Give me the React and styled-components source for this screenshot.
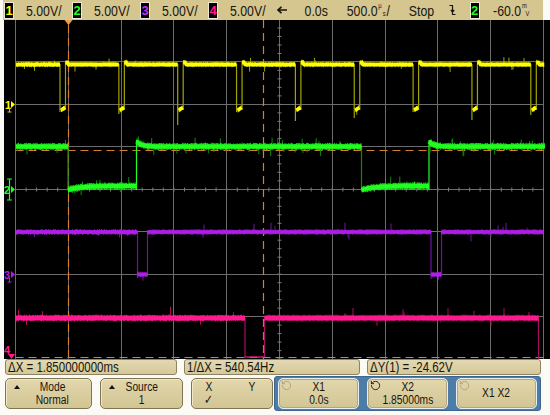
import React, { useMemo } from "react";
import styled, { createGlobalStyle } from "styled-components";
import { RotateCcw } from "lucide-react";

const FONT = `"Liberation Sans", Arial, sans-serif`;

const GlobalStyle = createGlobalStyle`
  html, body { margin: 0; padding: 0; background: #fbfaf4; }
`;

const Scope = styled.div`
  width: 550px;
  height: 415px;
  overflow: hidden;
  background: #fbfaf4;
  font-family: ${FONT};
  color: #17150e;
  display: flex;
  flex-direction: column;
`;

// the scope's own font is a narrow sans; squeeze Liberation Sans to match it
const Narrow = styled.span`
  display: inline-block;
  transform: scaleX(0.82);
  transform-origin: ${(p) => p.$origin || "center"};
  white-space: nowrap;
`;

const Header = styled.div`
  flex: none;
  margin-left: 3px;
  width: 540px;
  height: 20px;
  box-sizing: border-box;
  padding-left: 2px;
  background: #d5c58f;
  display: flex;
  align-items: center;
  font-size: 15px;
`;

const Cell = styled.div`
  flex: none;
  width: ${(p) => p.$w}px;
  display: flex;
  align-items: center;
  justify-content: ${(p) => p.$justify || "center"};
  white-space: nowrap;
`;

const Badge = styled.span`
  flex: none;
  display: inline-flex;
  align-items: center;
  justify-content: center;
  width: 8px;
  height: 15px;
  margin-right: ${(p) => p.$gap || 0}px;
  background: #000;
  color: ${(p) => p.$color};
  font-weight: bold;
  font-size: 13px;
  outline: 1px solid #efe9cf;
`;

const ValueRow = styled.span`
  display: inline-flex;
  align-items: center;
`;

const Stack = styled.span`
  display: inline-flex;
  flex-direction: column;
  width: 9px;
  margin: 0 1px;
  font-size: 7px;
  line-height: 8px;
  & > span:first-child { align-self: flex-start; }
  & > span:last-child { align-self: flex-end; }
`;

const Screen = styled.div`
  flex: none;
  margin-left: 4px;
  width: 546px;
  height: 339px;
  background: #000;
  & > svg { display: block; }
`;

const StatusRow = styled.div`
  flex: none;
  height: 17px;
  display: flex;
  gap: 7px;
  padding-left: 5px;
  align-items: flex-start;
`;

const StatusBox = styled.div`
  flex: none;
  width: ${(p) => p.$w}px;
  height: 16px;
  box-sizing: border-box;
  border: 1px solid #8d8262;
  border-radius: 3px;
  background: linear-gradient(#e3d8b0, #d5c89a);
  font-size: 14px;
  line-height: 14px;
  padding-left: 2px;
  white-space: nowrap;
  overflow: hidden;
`;

const KeyRow = styled.div`
  flex: none;
  height: 35px;
  display: flex;
  align-items: center;
  padding-left: 5px;
`;

const KeyGroup = styled.div`
  display: flex;
  gap: 8px;
`;

const BluePanel = styled.div`
  flex: none;
  margin-left: 1px;
  width: 267px;
  height: 35px;
  box-sizing: border-box;
  padding: 0 3px;
  background: #4e7ca7;
  border: 1px solid #3a6690;
  border-radius: 3px;
  display: flex;
  align-items: center;
  gap: 8px;
`;

const Softkey = styled.div`
  position: relative;
  flex: none;
  width: ${(p) => p.$w}px;
  height: 31px;
  box-sizing: border-box;
  padding-left: ${(p) => p.$padL || 0}px;
  border: 1px solid ${(p) => (p.$onBlue ? "#e8eef1" : "#7f7454")};
  border-radius: 5px;
  background: linear-gradient(#e2d7ac, #d2c594);
  box-shadow: ${(p) => (p.$onBlue ? "inset 0 0 0 1px #b3a67c" : "inset 1px 1px 0 #f0e8c8")};
  display: flex;
  flex-direction: column;
  align-items: center;
  justify-content: center;
  font-size: 12.5px;
  line-height: 13px;
  white-space: nowrap;
`;

const UpMark = styled.span`
  position: absolute;
  left: 8px;
  top: 6px;
  width: 0;
  height: 0;
  border-left: 3px solid transparent;
  border-right: 3px solid transparent;
  border-bottom: 4px solid #111;
`;

const KeyIcon = styled(RotateCcw)`
  position: absolute;
  left: 2px;
  top: 1px;
  color: ${(p) => (p.$dim ? "#aaa28a" : "#1d1b14")};
`;

const XYGrid = styled.div`
  display: grid;
  grid-template-columns: 32px 32px;
  column-gap: 11px;
  padding-right: 4px;
  text-align: center;
`;

/* ---------- waveform drawing ---------- */

const gx = (i) => 15.5 + Math.round(i * 52.8);
const gy = (j) => 19.5 + Math.round(j * 42.45);

function rnd(seed) {
  let s = seed % 2147483647;
  return () => {
    s = (s * 16807) % 2147483647;
    return (s - 1) / 2147483646;
  };
}

function trace(segs, o, seed) {
  const r = rnd(seed);
  const out = { band: "", fuzz: "", spike: "", edge: "", bright: "" };
  for (const s of segs) {
    if (s.t === "e") {
      out[s.bright ? "bright" : "edge"] += `M${s.x} ${s.y0}V${s.y1}`;
    } else if (s.t === "h") {
      out.bright += `M${s.x0} ${s.y}H${s.x1}`;
    } else {
      const yf = typeof s.y === "function" ? s.y : () => s.y;
      out.band += `M${s.x0} ${yf(s.x0).toFixed(1)}`;
      for (let x = s.x0 + 1; x < s.x1; x += 1) out.band += `L${x.toFixed(1)} ${yf(x).toFixed(1)}`;
      out.band += `L${s.x1} ${yf(s.x1).toFixed(1)}`;
      for (let x = s.x0 + 0.5; x < s.x1; x += o.step) {
        const y = yf(x);
        const a = r() * o.fz;
        const b = r() * o.fz;
        out.fuzz += `M${x.toFixed(1)} ${(y - o.w / 2 - a).toFixed(1)}V${(y + o.w / 2 + b).toFixed(1)}`;
        if (r() < o.sp) {
          const len = 2 + r() * o.spl;
          const up = r() < 0.5;
          out.spike += `M${x.toFixed(1)} ${y.toFixed(1)}V${(up ? y - o.w / 2 - len : y + o.w / 2 + len).toFixed(1)}`;
        }
      }
    }
  }
  return out;
}

function yellowSegs() {
  const segs = [];
  const extra = [0, 2, 13, 0, 9, 6, 0, 8, 3];
  let cur = 16;
  for (let k = 0; k < 9; k++) {
    const f = 60 + 58.85 * k;
    const start = cur;
    segs.push({ t: "l", x0: start, x1: f, y: (x) => (k > 0 && x - start < 3 ? 62.5 : 64.5) });
    segs.push({ t: "e", x: f, y0: 64, y1: 112 + extra[k] });
    segs.push({ t: "l", x0: f + 1, x1: f + 5, y: (x) => 111 - (x - f) * 0.7 });
    segs.push({ t: "e", x: f + 5.5, y0: 110, y1: 62 });
    cur = f + 5.5;
  }
  segs.push({ t: "l", x0: cur, x1: 544, y: (x) => (x - cur < 3 ? 62.5 : 64.5) });
  return segs;
}

const gLow = (xs) => (x) => 186 + 4 * Math.exp(-(x - xs) / 12);
const gHigh = (xs) => (x) => 146.5 - 5 * Math.exp(-(x - xs) / 5);

const greenSegs = [
  { t: "l", x0: 16, x1: 68, y: 146.5 },
  { t: "e", x: 68, y0: 146, y1: 191 },
  { t: "l", x0: 68, x1: 136.5, y: gLow(68) },
  { t: "e", x: 136.5, y0: 190, y1: 140, bright: true },
  { t: "l", x0: 136.5, x1: 361.5, y: gHigh(136.5) },
  { t: "e", x: 361.5, y0: 146, y1: 191 },
  { t: "l", x0: 361.5, x1: 429, y: gLow(361.5) },
  { t: "e", x: 429, y0: 190, y1: 140, bright: true },
  { t: "l", x0: 429, x1: 545, y: gHigh(429) },
];

const purpleSegs = [
  { t: "l", x0: 16, x1: 137.5, y: 232 },
  { t: "e", x: 137.5, y0: 232, y1: 278 },
  { t: "l", x0: 137.5, x1: 147.5, y: 274.5 },
  { t: "e", x: 147.5, y0: 276, y1: 232 },
  { t: "l", x0: 147.5, x1: 431, y: 232 },
  { t: "e", x: 431, y0: 232, y1: 279 },
  { t: "l", x0: 431, x1: 441.5, y: 274.5 },
  { t: "e", x: 441.5, y0: 276, y1: 232 },
  { t: "l", x0: 441.5, x1: 543, y: 232 },
];

const pinkSegs = [
  { t: "l", x0: 16, x1: 245, y: 318 },
  { t: "e", x: 245, y0: 318, y1: 357 },
  { t: "h", x0: 245, x1: 264.5, y: 357 },
  { t: "e", x: 264.5, y0: 357, y1: 318 },
  { t: "l", x0: 264.5, x1: 538.5, y: 318 },
  { t: "e", x: 538.5, y0: 318, y1: 359 },
];

const CHANNELS = [
  { key: "y", color: "#ffff00", dim: "#a3a300", segs: yellowSegs(), o: { w: 3.5, fz: 1, step: 1, sp: 0.04, spl: 4 }, seed: 11 },
  { key: "g", color: "#22ff22", dim: "#0c8a0c", segs: greenSegs, o: { w: 4, fz: 1.8, step: 0.7, sp: 0.08, spl: 6 }, seed: 23 },
  { key: "p", color: "#b01ee8", dim: "#7212a2", segs: purpleSegs, o: { w: 3.5, fz: 1.2, step: 1, sp: 0.035, spl: 6 }, seed: 37 },
  { key: "k", color: "#ff1a8f", dim: "#a8105e", segs: pinkSegs, o: { w: 4.5, fz: 1.2, step: 1, sp: 0.04, spl: 7 }, seed: 53 },
];

function Graticule() {
  const v = [];
  const h = [];
  for (let i = 0; i <= 10; i++) v.push(`M${gx(i)} 20V359`);
  for (let j = 1; j <= 7; j++) h.push(`M15.5 ${gy(j)}H544`);
  const ticks = [];
  for (let k = 0; k <= 50; k++) {
    const x = (15.5 + k * 10.56).toFixed(1);
    ticks.push(`M${x} ${gy(4) - 2}V${gy(4) + 2}`);
  }
  for (let k = 0; k <= 40; k++) {
    const y = (19.5 + k * 8.49).toFixed(1);
    ticks.push(`M${gx(5) - 2} ${y}H${gx(5) + 2}`);
  }
  return (
    <g fill="none">
      <path d={v.join("") + h.join("")} stroke="#6c6c6c" strokeWidth="1" />
      <path d={ticks.join("")} stroke="#7c7c7c" strokeWidth="1" />
    </g>
  );
}

function Cursors() {
  return (
    <g fill="none" stroke="#d4802c" strokeWidth="1.2" strokeDasharray="8 5">
      <path d="M68.5 25V359" />
      <path d="M263.5 20V359" />
      <path d="M15.5 150.5H545" />
      <path d="M15.5 357.5H545" />
    </g>
  );
}

function Markers() {
  const txt = { fontFamily: FONT, fontSize: 11, fontWeight: "bold" };
  return (
    <g>
      <polygon points="64.5,20 72.5,20 68.5,25" fill="#f0a040" />
      <text x="5" y="109" fill="#ffff00" style={txt}>1</text>
      <polygon points="11,101 15,104.5 11,108" fill="#ffff00" />
      <path d="M9.5 108V112M7.5 112H11.5" stroke="#c8c800" strokeWidth="1" />

      <path d="M9.5 179V200M7 179H12M7 200H12" stroke="#22ff22" strokeWidth="1.2" />
      <text x="4" y="194" fill="#22ff22" style={txt}>2</text>
      <polygon points="11,186 15,189.5 11,193" fill="#22ff22" />

      <text x="4" y="279" fill="#b01ee8" style={txt}>3</text>
      <polygon points="11,271 15,274.5 11,278" fill="#b01ee8" />
      <path d="M9.5 278V282M7.5 282H11.5" stroke="#b01ee8" strokeWidth="1" />

      <text x="4" y="354" fill="#ff1a8f" style={txt}>4</text>
      <polygon points="8,354 15,354 11.5,359" fill="#ff1a8f" />
    </g>
  );
}

function Waveforms() {
  const traces = useMemo(() => CHANNELS.map((c) => ({ ...c, d: trace(c.segs, c.o, c.seed) })), []);
  return (
    <svg width="546" height="339" viewBox="4 20 546 339">
      <Graticule />
      <Cursors />
      {traces.map((t) => (
        <g key={t.key} fill="none">
          <path d={t.d.edge} stroke={t.dim} strokeWidth="1.2" />
          <path d={t.d.bright} stroke={t.color} strokeWidth="1.2" />
          <path d={t.d.spike} stroke={t.dim} strokeWidth="1" />
          <path d={t.d.band} stroke={t.color} strokeWidth={t.o.w} />
          <path d={t.d.fuzz} stroke={t.color} strokeWidth="0.8" />
        </g>
      ))}
      <Markers />
    </svg>
  );
}

/* ---------- header bits ---------- */

const LeftArrow = () => (
  <svg width="10" height="8" viewBox="0 0 10 8">
    <path d="M1 4H10M4.5 0.8L1 4L4.5 7.2" fill="none" stroke="#17150e" strokeWidth="1.6" />
  </svg>
);

const SlopeIcon = () => (
  <svg width="7" height="12" viewBox="0 0 7 12">
    <path d="M0.5 1.5H3.5V10.5H6.5M1.8 6L3.5 8L5.2 6" fill="none" stroke="#17150e" strokeWidth="1.2" />
  </svg>
);

const Channel = ({ n, color }) => (
  <Cell $w={68} $justify="flex-start">
    <Badge $color={color} $gap={13}>{n}</Badge>
    <Narrow $origin="left">5.00V/</Narrow>
  </Cell>
);

export default function App() {
  return (
    <Scope>
      <GlobalStyle />
      <Header>
        <Channel n="1" color="#ffff00" />
        <Channel n="2" color="#22ff22" />
        <Channel n="3" color="#c030ff" />
        <Channel n="4" color="#ff1a8f" />
        <Cell $w={14} $justify="flex-start">
          <LeftArrow />
        </Cell>
        <Cell $w={50}>
          <Narrow>0.0s</Narrow>
        </Cell>
        <Cell $w={55}>
          <Narrow>
            <ValueRow>
              <span>500.0</span>
              <Stack>
                <span>µ</span>
                <span>s</span>
              </Stack>
              <span>/</span>
            </ValueRow>
          </Narrow>
        </Cell>
        <Cell $w={50}>
          <Narrow>Stop</Narrow>
        </Cell>
        <Cell $w={13}>
          <SlopeIcon />
        </Cell>
        <Cell $w={31}>
          <Badge $color="#22ff22">2</Badge>
        </Cell>
        <Cell $w={43}>
          <Narrow>
            <ValueRow>
              <span>-60.0</span>
              <Stack>
                <span>m</span>
                <span>V</span>
              </Stack>
            </ValueRow>
          </Narrow>
        </Cell>
      </Header>

      <Screen>
        <Waveforms />
      </Screen>

      <StatusRow>
        <StatusBox $w={172}>
          <Narrow $origin="left">ΔX = 1.850000000ms</Narrow>
        </StatusBox>
        <StatusBox $w={176}>
          <Narrow $origin="left">1/ΔX = 540.54Hz</Narrow>
        </StatusBox>
        <StatusBox $w={174}>
          <Narrow $origin="left">ΔY(1) = -24.62V</Narrow>
        </StatusBox>
      </StatusRow>

      <KeyRow>
        <KeyGroup>
          <Softkey $w={87} $padL={8}>
            <UpMark />
            <Narrow>Mode</Narrow>
            <Narrow>Normal</Narrow>
          </Softkey>
          <Softkey $w={83}>
            <UpMark />
            <Narrow>Source</Narrow>
            <Narrow>1</Narrow>
          </Softkey>
          <Softkey $w={82}>
            <XYGrid>
              <Narrow>X</Narrow>
              <Narrow>Y</Narrow>
              <Narrow>✓</Narrow>
              <span />
            </XYGrid>
          </Softkey>
        </KeyGroup>
        <BluePanel>
          <Softkey $w={81} $onBlue>
            <KeyIcon size={11} strokeWidth={2} $dim />
            <Narrow>X1</Narrow>
            <Narrow>0.0s</Narrow>
          </Softkey>
          <Softkey $w={81} $onBlue>
            <KeyIcon size={11} strokeWidth={2} />
            <Narrow>X2</Narrow>
            <Narrow>1.85000ms</Narrow>
          </Softkey>
          <Softkey $w={81} $onBlue>
            <KeyIcon size={11} strokeWidth={2} $dim />
            <Narrow>X1 X2</Narrow>
          </Softkey>
        </BluePanel>
      </KeyRow>
    </Scope>
  );
}
